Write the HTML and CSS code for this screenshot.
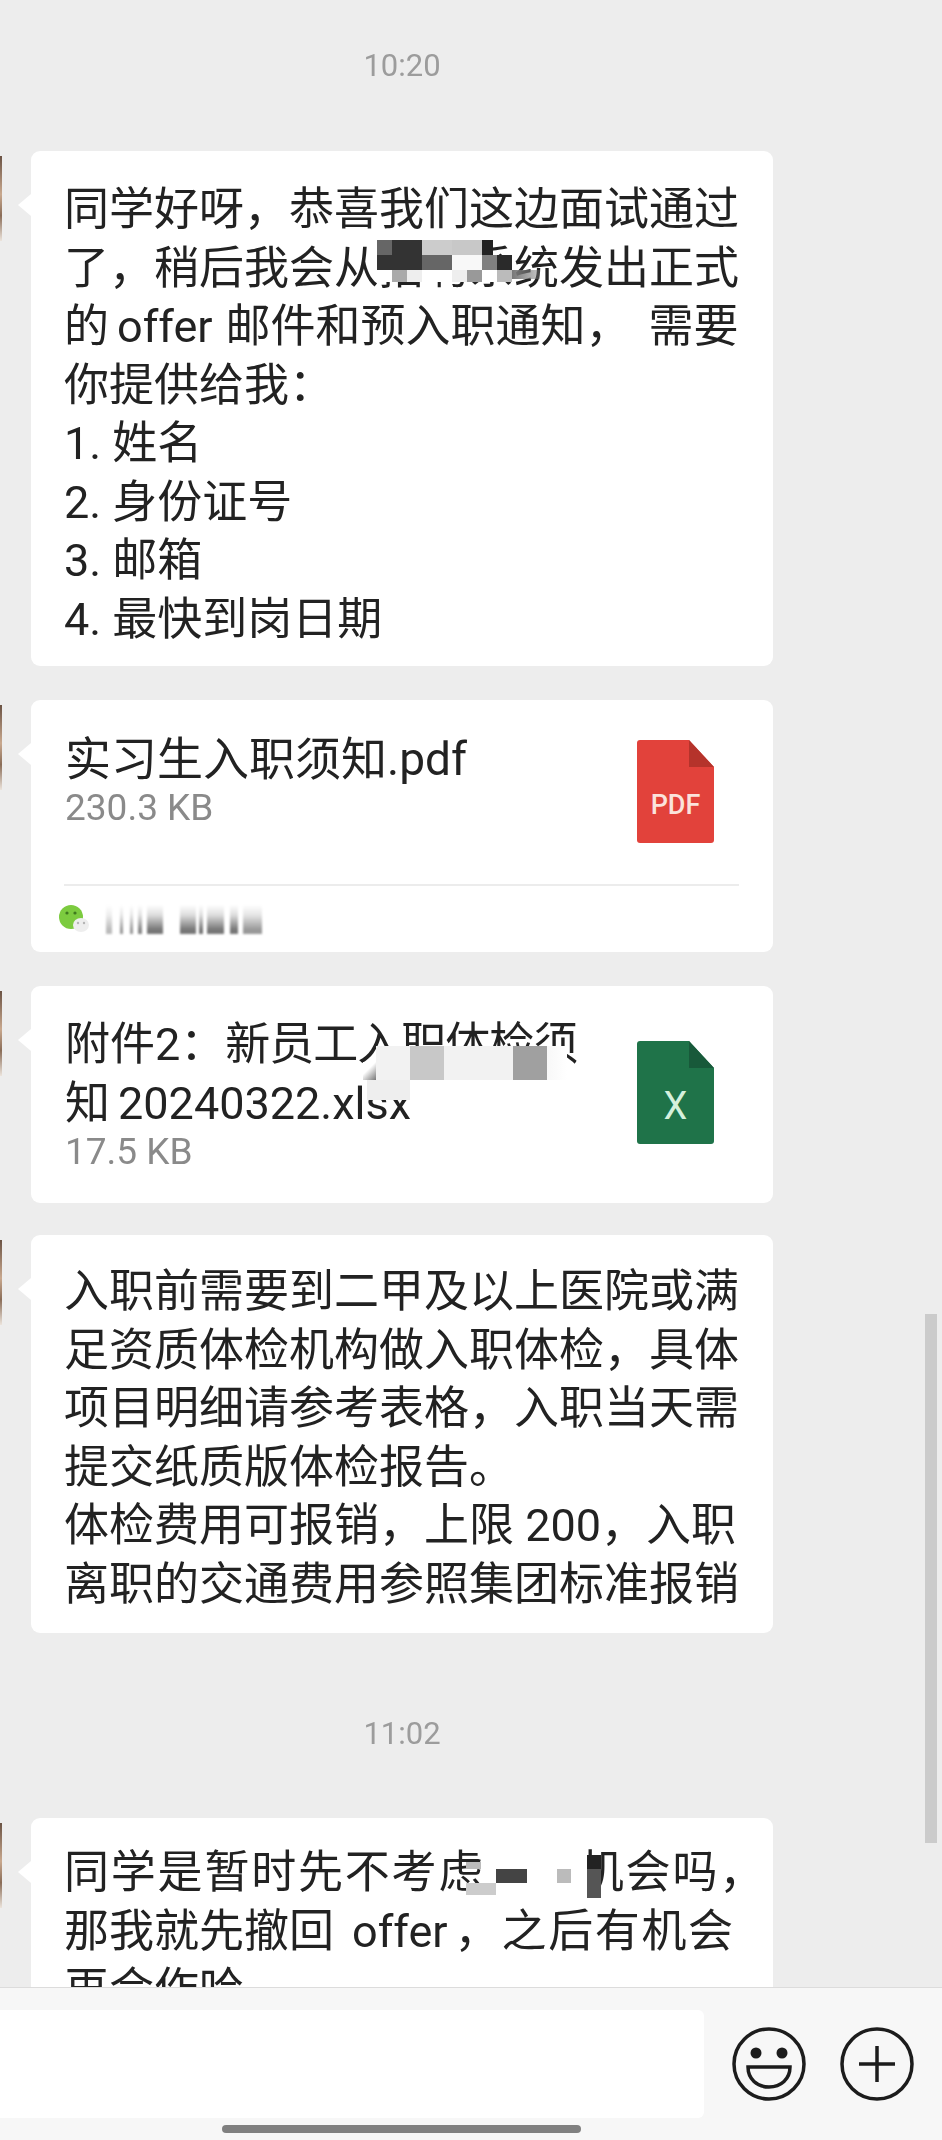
FILE: index.html
```html
<!DOCTYPE html>
<html lang="zh">
<head>
<meta charset="utf-8">
<title>聊天</title>
<link rel="stylesheet" href="styles.css">
</head>
<body>
<div class="screen">
  <main class="chat">
    <div class="time time-first">10:20</div>

    <div class="msg text-card card-a">
      <p class="lines">同学好呀，恭喜我们这边面试通过<br>了，稍后我会从招聘系统发出正式<br>的<span class="latin">offer</span>邮件和预入职通知，<span class="gap"></span>需要<br>你提供给我：<br>1. 姓名<br>2. 身份证号<br>3. 邮箱<br>4. 最快到岗日期</p>
      <div class="mosaic mosaic-a">
        <i class="bk a1"></i><i class="bk a2"></i><i class="bk a3"></i><i class="bk a4"></i><i class="bk a5"></i>
        <i class="bk a6"></i><i class="bk a7"></i><i class="bk a8"></i><i class="bk a9"></i><i class="bk a10"></i>
        <i class="bk a11"></i><i class="bk a12"></i><i class="bk a13"></i><i class="bk a14"></i><i class="bk a15"></i><i class="bk a16"></i><i class="bk a17"></i><i class="bk a18"></i>
      </div>
    </div>

    <div class="msg file-card card-b">
      <div class="file-row file-row-b">
        <div class="file-text">
          <div class="file-name name-wide">实习生入职须知.pdf</div>
          <div class="file-size">230.3 KB</div>
        </div>
        <svg class="file-icon" viewBox="0 0 77 103" aria-hidden="true">
          <path class="pdf-body" d="M3 0H52L77 27V100a3 3 0 0 1-3 3H3a3 3 0 0 1-3-3V3a3 3 0 0 1 3-3Z"/>
          <path class="pdf-fold" d="M52 0L77 27H52Z"/>
          <text class="pdf-label" x="38.5" y="74" text-anchor="middle">PDF</text>
        </svg>
      </div>
      <div class="file-foot">
        <svg class="wx-icon" viewBox="0 0 32 30" aria-hidden="true">
          <ellipse class="wx-big" cx="13" cy="13" rx="12" ry="12"/>
          <circle class="wx-eye" cx="9" cy="9" r="1.6"/>
          <circle class="wx-eye" cx="17" cy="9" r="1.6"/>
          <ellipse class="wx-small" cx="23" cy="21" rx="8" ry="7"/>
          <circle class="wx-dot" cx="20" cy="19" r="1.2"/>
          <circle class="wx-dot" cx="26" cy="19" r="1.2"/>
        </svg>
        <div class="blur-name"></div>
      </div>
    </div>

    <div class="msg file-card card-c">
      <div class="file-row file-row-c">
        <div class="file-text">
          <div class="file-name">附件2：<span class="tight">新员工入职体检须</span><br>知<span class="digits">20240322.xlsx</span></div>
          <div class="file-size">17.5 KB</div>
        </div>
        <svg class="file-icon" viewBox="0 0 77 103" aria-hidden="true">
          <path class="xls-body" d="M3 0H52L77 27V100a3 3 0 0 1-3 3H3a3 3 0 0 1-3-3V3a3 3 0 0 1 3-3Z"/>
          <path class="xls-fold" d="M52 0L77 27H52Z"/>
          <text class="xls-label" x="38.5" y="78" text-anchor="middle">X</text>
        </svg>
      </div>
      <div class="mosaic mosaic-c">
        <i class="bk c1"></i><i class="bk c2"></i><i class="bk c3"></i><i class="bk c4"></i><i class="bk c5"></i><i class="bk c6"></i><i class="bk c7"></i>
      </div>
    </div>

    <div class="msg text-card card-d">
      <p class="lines">入职前需要到二甲及以上医院或满<br>足资质体检机构做入职体检，具体<br>项目明细请参考表格，入职当天需<br>提交纸质版体检报告。<br>体检费用可报销，上限 200，入职<br>离职的交通费用参照集团标准报销</p>
    </div>

    <div class="time time-second">11:02</div>

    <div class="msg text-card card-e">
      <p class="lines"><span class="loose">同学是暂时先不考虑其他机会吗，</span><br>那我就先撤回<span class="latin latin-e">offer</span>，<span class="spread">之后有机会</span><br>再合作哈</p>
      <div class="mosaic mosaic-e">
        <i class="bk e0"></i><i class="bk e1"></i><i class="bk e2"></i><i class="bk e3"></i><i class="bk e4"></i><i class="bk e5"></i><i class="bk e6"></i>
      </div>
    </div>
  </main>

  <div class="scrollbar"></div>

  <footer class="bar">
    <div class="input"></div>
    <svg class="tool" viewBox="0 0 76 76" aria-hidden="true">
      <circle class="line" cx="38" cy="38" r="35"/>
      <circle class="fill" cx="25" cy="27" r="5.5"/>
      <circle class="fill" cx="51" cy="27" r="5.5"/>
      <path class="line" d="M17 41H59C59 53 50 61 38 61S17 53 17 41Z"/>
    </svg>
    <svg class="tool" viewBox="0 0 76 76" aria-hidden="true">
      <circle class="line" cx="38" cy="38" r="35"/>
      <path class="line" d="M20 38H56M38 20V56"/>
    </svg>
    <div class="home"></div>
  </footer>
</div>
</body>
</html>
```
FILE: styles.css
```css
* { box-sizing: border-box; }
html, body { margin: 0; padding: 0; }
body {
  width: 942px;
  height: 2140px;
  overflow: hidden;
  background: #ededed;
  font-family: Roboto, "Noto Sans CJK SC", sans-serif;
  color: #222;
}
.screen {
  position: relative;
  width: 942px;
  height: 2140px;
  display: flex;
  flex-direction: column;
}
.chat {
  height: 1987px;
  flex: none;
  overflow: hidden;
  padding-left: 31px;
  display: flex;
  flex-direction: column;
  align-items: flex-start;
}
.time {
  width: 742px;
  flex: none;
  text-align: center;
  font-size: 31px;
  line-height: 40px;
  color: #9c9c9c;
  filter: blur(.4px);
}
.time-first { margin-top: 46px; }
.time-second { margin-top: 81px; }

.msg {
  position: relative;
  flex: none;
  width: 742px;
  background: #fff;
  border-radius: 9px;
}
.msg::before {
  content: "";
  position: absolute;
  left: -31px;
  top: 5px;
  width: 2px;
  height: 85px;
  background: linear-gradient(#6b5344, #c9a98f 45%, #8a6d58 70%, #ece4dc);
}
.msg::after {
  content: "";
  position: absolute;
  left: -13px;
  top: 43px;
  border-style: solid;
  border-width: 11px 13px 11px 0;
  border-color: transparent #fff transparent transparent;
}
.lines {
  margin: 0;
  font-size: 45px;
  line-height: 58.5px;
  white-space: nowrap;
  filter: blur(.4px);
}
.latin { margin: 0 13px 0 8px; }
.latin-e { margin: 0 7px 0 18px; }
.gap { display: inline-block; width: 18px; }
.spread { letter-spacing: 1.6px; margin-left: 2px; }
.loose { letter-spacing: 1.8px; }
.text-card { padding-left: 33px; }
.card-a { margin-top: 65px; height: 515px; padding-top: 30px; }
.card-b { margin-top: 34px; height: 252px; }
.card-c { margin-top: 34px; height: 217px; }
.card-d { margin-top: 32px; height: 398px; padding-top: 28px; }
.card-e { margin-top: 64px; height: 240px; padding-top: 26px; }

.file-row {
  display: flex;
  justify-content: space-between;
  align-items: flex-start;
  padding-left: 34px;
  padding-right: 59px;
}
.file-row-b { height: 184px; padding-top: 30px; }
.file-row-c { padding-top: 29px; }
.file-text { flex: none; white-space: nowrap; filter: blur(.4px); }
.file-name { font-size: 45px; line-height: 59px; }
.name-wide { font-size: 46px; }
.tight { letter-spacing: -1px; }
.digits { margin-left: 8px; }
.file-size { margin-top: -1px; font-size: 37px; line-height: 40px; color: #8a8a8a; }
.file-icon { flex: none; width: 77px; height: 103px; margin-top: 10px; display: block; }
.file-row-c .file-icon { margin-top: 26px; }
.pdf-body { fill: #e2423b; }
.pdf-fold { fill: #b5332b; }
.pdf-label { font: 500 27px Roboto, sans-serif; fill: #fbe3dc; }
.xls-body { fill: #1f7349; }
.xls-fold { fill: #18593a; }
.xls-label { font: 400 38px Roboto, sans-serif; fill: #d5f0dd; }

.file-foot {
  margin: 0 34px 0 33px;
  height: 68px;
  border-top: 2px solid #ececec;
  display: flex;
  align-items: center;
  gap: 16px;
}
.wx-icon { width: 32px; height: 30px; margin-left: -6px; flex: none; filter: blur(.5px); }
.wx-big { fill: #7ccb3f; }
.wx-eye { fill: #3f7a1e; }
.wx-small { fill: #eeeeee; }
.wx-dot { fill: #b5b5b5; }
.blur-name {
  width: 156px;
  height: 29px;
  filter: blur(1px);
  background:
    linear-gradient(#fff, rgba(255,255,255,.75) 35%, rgba(255,255,255,0) 85%),
    linear-gradient(90deg,
      #bbb 0 6px, #fff 6px 14px, #999 14px 17px, #fff 17px 24px, #999 24px 27px, #fff 27px 32px,
      #888 32px 36px, #fff 36px 41px, #777 41px 57px, #fff 57px 74px, #777 74px 90px, #fff 90px 93px,
      #777 93px 97px, #fff 97px 101px, #777 101px 118px, #fff 118px 124px, #777 124px 132px, #fff 132px 137px,
      #999 137px 156px);
}

.mosaic { position: absolute; left: 0; top: 0; width: 0; height: 0; }
.bk { position: absolute; display: block; }
/* first message: coordinates relative to card at (31,152) */
.a1  { left: 346px; top: 89px; width: 15px; height: 15px; background: #666; }
.a2  { left: 361px; top: 89px; width: 30px; height: 15px; background: #333; }
.a3  { left: 391px; top: 89px; width: 30px; height: 15px; background: #ccc; }
.a4  { left: 421px; top: 89px; width: 30px; height: 15px; background: #c8c8c8; }
.a5  { left: 451px; top: 89px; width: 11px; height: 15px; background: #222; }
.a6  { left: 346px; top: 104px; width: 45px; height: 15px; background: #333; }
.a7  { left: 391px; top: 104px; width: 30px; height: 15px; background: #666; }
.a8  { left: 421px; top: 104px; width: 30px; height: 15px; background: #f8f8f8; }
.a9  { left: 451px; top: 104px; width: 15px; height: 15px; background: #808080; }
.a10 { left: 466px; top: 104px; width: 15px; height: 15px; background: #2a2a2a; }
.a11 { left: 346px; top: 119px; width: 15px; height: 12px; background: #fff; }
.a12 { left: 361px; top: 119px; width: 15px; height: 12px; background: #aaa; }
.a13 { left: 376px; top: 119px; width: 15px; height: 12px; background: #eee; }
.a14 { left: 391px; top: 119px; width: 30px; height: 12px; background: #fff; }
.a15 { left: 421px; top: 119px; width: 15px; height: 12px; background: #eee; }
.a16 { left: 436px; top: 119px; width: 15px; height: 12px; background: #999; }
.a17 { left: 451px; top: 119px; width: 30px; height: 12px; background: linear-gradient(90deg, #fff 50%, #bbb 50%); }
.a18 { left: 481px; top: 119px; width: 28px; height: 9px; background: linear-gradient(90deg, #777, rgba(119,119,119,.4)); }

/* xlsx message: card at (31,986) */
.c1 { left: 345px; top: 60px; width: 34px; height: 34px; background: #f2f2f2; }
.c2 { left: 379px; top: 60px; width: 34px; height: 34px; background: #c8c8c8; }
.c3 { left: 413px; top: 60px; width: 69px; height: 34px; background: #f2f2f2; }
.c4 { left: 482px; top: 60px; width: 34px; height: 34px; background: #a0a0a0; }
.c5 { left: 516px; top: 60px; width: 20px; height: 34px; background: linear-gradient(90deg, #f8f8f8, #fff); }
.c6 { left: 336px; top: 94px; width: 43px; height: 20px; background: #eee; }
.c7 { left: 332px; top: 76px; width: 13px; height: 18px; background: linear-gradient(135deg, #fff 40%, #777); }

/* last message: card at (31,1818) */
.e0 { left: 450px; top: 26px; width: 106px; height: 60px; background: #fff; }
.e1 { left: 435px; top: 44px; width: 15px; height: 7px; background: #bbb; }
.e2 { left: 435px; top: 65px; width: 30px; height: 12px; background: #ccc; }
.e3 { left: 465px; top: 51px; width: 31px; height: 14px; background: #444; }
.e4 { left: 526px; top: 51px; width: 14px; height: 14px; background: #bbb; }
.e5 { left: 556px; top: 37px; width: 14px; height: 14px; background: #222; }
.e6 { left: 556px; top: 51px; width: 14px; height: 29px; background: #555; }

.scrollbar {
  position: absolute;
  left: 925px;
  top: 1314px;
  width: 12px;
  height: 529px;
  background: #cbcbcb;
}

.bar {
  position: relative;
  flex: 1;
  background: #f7f7f7;
  border-top: 1px solid #dcdcdc;
  padding-top: 22px;
  display: flex;
  align-items: flex-start;
}
.input { width: 704px; height: 108px; background: #fff; border-radius: 0 6px 6px 0; flex: none; }
.tool { width: 76px; height: 76px; flex: none; margin-top: 16px; }
.tool:first-of-type { margin-left: 27px; }
.tool + .tool { margin-left: 32px; }
.line { fill: none; stroke: #1c1c1c; stroke-width: 3.5; }
.fill { fill: #1c1c1c; }
.home {
  position: absolute;
  left: 222px;
  top: 137px;
  width: 359px;
  height: 8px;
  border-radius: 4px;
  background: #808080;
}
```
